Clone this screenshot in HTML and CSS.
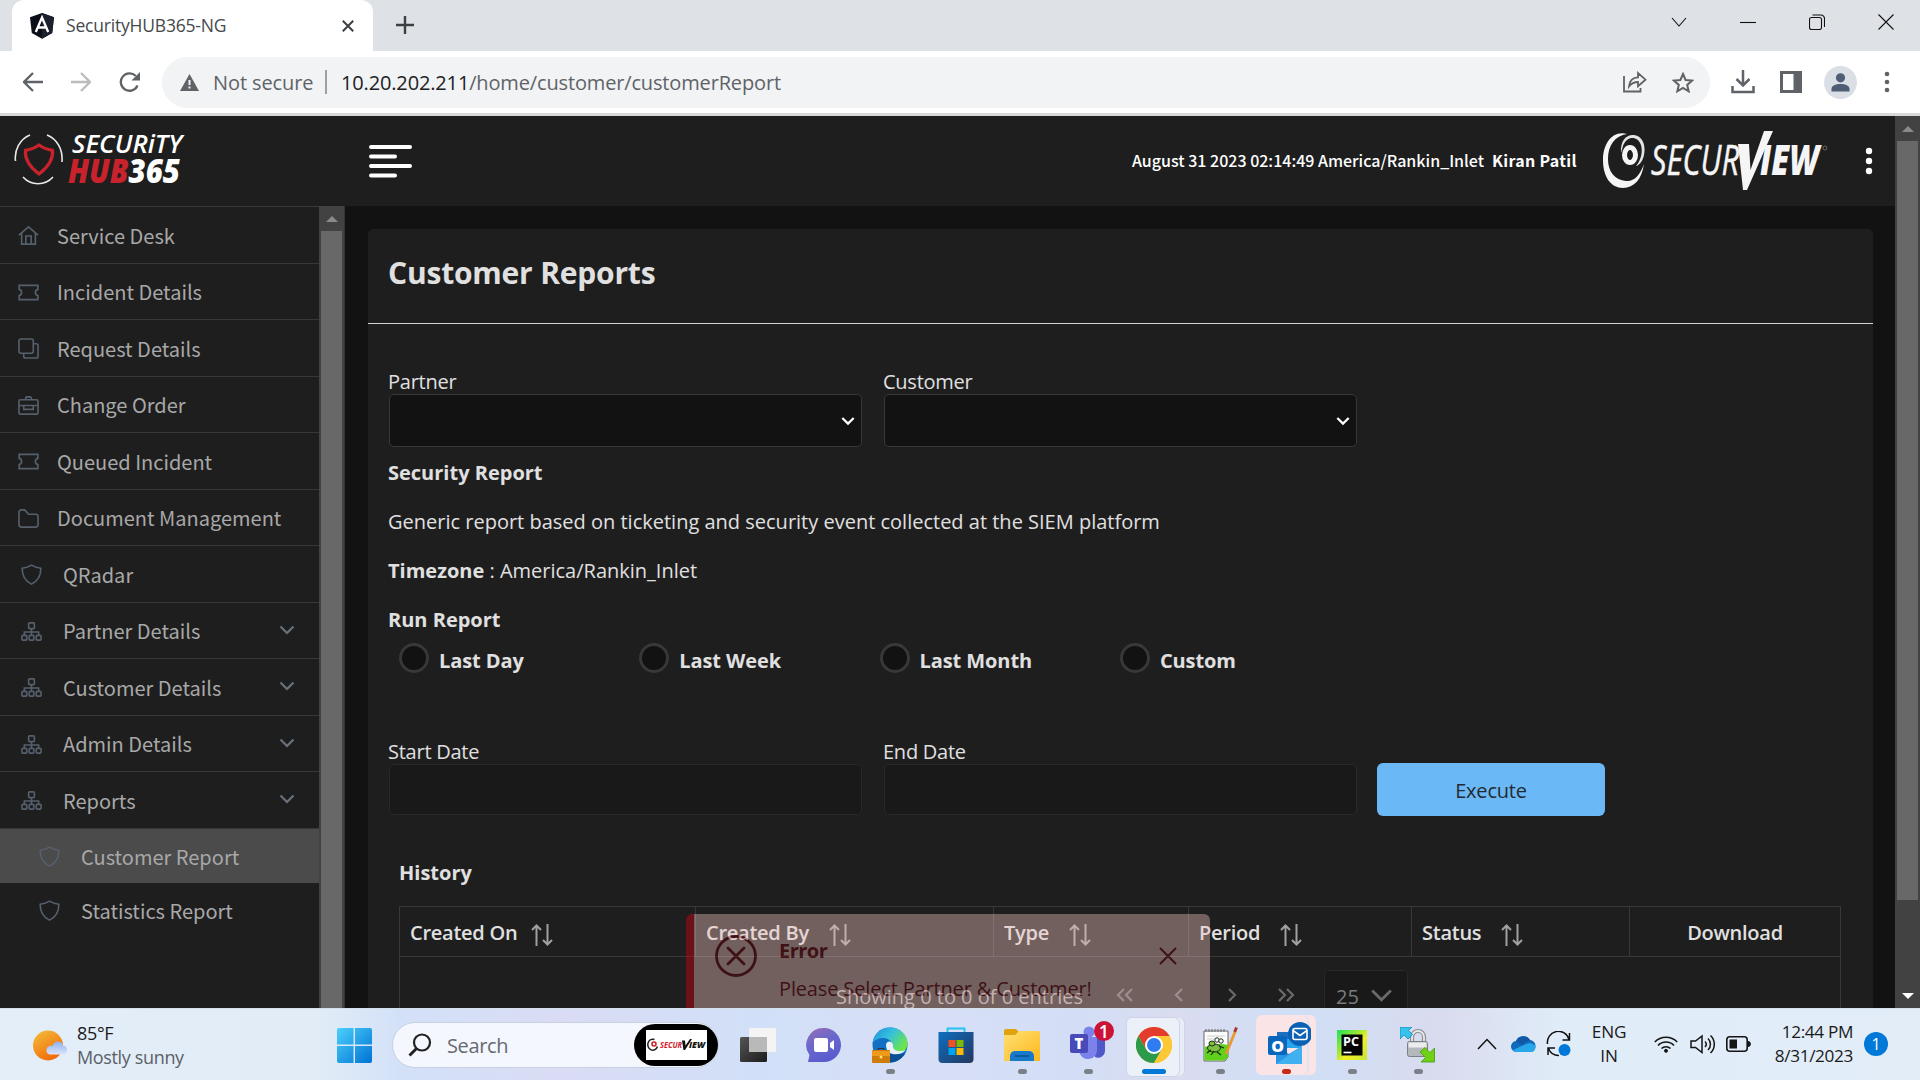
FILE: index.html
```html
<!DOCTYPE html>
<html lang="en">
<head>
<meta charset="utf-8">
<title>SecurityHUB365-NG</title>
<link rel="stylesheet" href="styles.css">
</head>
<body>
<svg width="0" height="0" class="defs">
  <defs>
    <symbol id="i-home" viewBox="0 0 22 22"><path d="M1 10.500 11 2l10 8.500M3.800 9v11h14.400V9M8.200 20v-8.500h5.600V20"/></symbol>
    <symbol id="i-ticket" viewBox="0 0 22 22"><path d="M1.200 3.500h19.600v4.200a3.400 3.400 0 0 0 0 6.600v4.200H1.200v-4.200a3.400 3.400 0 0 0 0-6.600z"/></symbol>
    <symbol id="i-clone" viewBox="0 0 22 22"><rect x="1" y="1" width="15" height="15" rx="2"/><path d="M16 6h3a2 2 0 0 1 2 2v11a2 2 0 0 1-2 2H8a2 2 0 0 1-2-2v-3"/></symbol>
    <symbol id="i-case" viewBox="0 0 22 22"><rect x="1" y="5" width="20" height="15" rx="1.500"/><path d="M8 5V3.500A1.500 1.500 0 0 1 9.500 2h3A1.500 1.500 0 0 1 14 3.500V5M1 11h20M6 11v4h10v-4"/></symbol>
    <symbol id="i-folder" viewBox="0 0 22 22"><path d="M1 4.500A2.500 2.500 0 0 1 3.500 2H7l4 4.500h7.500A2.500 2.500 0 0 1 21 9v8.500a2.500 2.500 0 0 1-2.500 2.500h-15A2.500 2.500 0 0 1 1 17.500z"/></symbol>
    <symbol id="i-shield" viewBox="0 0 22 22"><path d="M11 1.200C8 3 5 4 1.300 4.400c-.3 7 2 12.600 9.700 16.700 7.700-4.100 10-9.700 9.700-16.700C17 4 14 3 11 1.200z"/></symbol>
    <symbol id="i-tree" viewBox="0 0 22 22"><rect x="8" y="2" width="6" height="6" rx="1"/><rect x="1" y="15" width="5" height="5" rx="1"/><rect x="8.500" y="15" width="5" height="5" rx="1"/><rect x="16" y="15" width="5" height="5" rx="1"/><path d="M11 8v7M3.500 15v-3.500h15V15"/></symbol>
    <symbol id="i-down" viewBox="0 0 16 16"><path d="m1.500 4.500 6.500 6.500 6.500-6.500"/></symbol>
    <symbol id="i-sort" viewBox="0 0 22 22"><path d="M5.500 22V1.500M1 6l4.500-4.500L10 6M16.500 0v20.500M12 16l4.500 4.500L21 16"/></symbol>
    <symbol id="i-left" viewBox="0 0 16 16"><path d="m11 2-6 6 6 6"/></symbol>
    <symbol id="i-right" viewBox="0 0 16 16"><path d="m5 2 6 6-6 6"/></symbol>
    <symbol id="i-lefts" viewBox="0 0 18 16"><path d="m8 2-6 6 6 6M16 2l-6 6 6 6"/></symbol>
    <symbol id="i-rights" viewBox="0 0 18 16"><path d="m2 2 6 6-6 6M10 2l6 6-6 6"/></symbol>
  </defs>
</svg>

<div class="tabstrip">
  <div class="tab">
    <svg class="favicon" width="26" height="26" viewBox="0 0 26 26"><path d="M13 0 25 4.300 23.200 20 13 25.700 2.800 20 1 4.300z" fill="#0b0e18"/><path d="M13 0v25.700L23.200 20 25 4.300z" fill="#1b202e"/><path d="M6.800 19 13 4.500 19.200 19M9.300 14.500h7.400" fill="none" stroke="#fff" stroke-width="2.300"/></svg>
    <span class="tab-title">SecurityHUB365-NG</span>
    <svg class="tab-close" width="12" height="12" viewBox="0 0 12 12"><path d="m.8.800 10.400 10.400M11.200.800.800 11.200" stroke="#3c4043" stroke-width="2"/></svg>
  </div>
  <svg class="new-tab" width="18" height="18" viewBox="0 0 18 18"><path d="M9 0v18M0 9h18" stroke="#3c4043" stroke-width="2.400"/></svg>
  <div class="win-controls">
    <svg width="16" height="16" viewBox="0 0 16 16"><path d="m1 4 7 8 7-8" /></svg>
    <svg width="16" height="16" viewBox="0 0 16 16"><path d="M0 8.500h16"/></svg>
    <svg width="16" height="16" viewBox="0 0 16 16"><rect x=".5" y="3.500" width="12" height="12" rx="2"/><path d="M3.500 1h8.500a3.500 3.500 0 0 1 3.500 3.500V13"/></svg>
    <svg width="16" height="16" viewBox="0 0 16 16"><path d="m.5.500 15 15M15.500.500l-15 15"/></svg>
  </div>
</div>

<div class="toolbar">
  <div class="nav">
    <svg width="20" height="20" viewBox="0 0 20 20" stroke="#5f6368"><path d="M20 10H1.500M10 1 1 10l9 9"/></svg>
    <svg width="20" height="20" viewBox="0 0 20 20" stroke="#babcbe"><path d="M0 10h18.500M10 1l9 9-9 9"/></svg>
    <svg width="22" height="20" viewBox="0 0 22 20" stroke="#5f6368"><path d="M18.500 13.500A8.700 8.700 0 1 1 16.800 4"/><path d="M21 0v8.500h-8.500z" fill="#5f6368" stroke="none"/></svg>
  </div>
  <div class="omnibox">
    <svg width="19" height="17" viewBox="0 0 19 17"><path d="M9.500 0 19 17H0z" fill="#5f6368"/><path d="M9.500 6v5M9.500 12.500v2" stroke="#f1f3f4" stroke-width="2"/></svg>
    <span class="not-secure">Not secure</span>
    <i class="omni-sep"></i>
    <span class="url"><b>10.20.202.211</b><span>/home/customer/customerReport</span></span>
    <svg class="share" width="24" height="22" viewBox="0 0 24 22"><path d="M1 5v15.500h16.500V17M6 15.500c.5-6 3.500-9 9-9.200V2l7.500 6.700L15 15.300V11c-4 0-6.500 1.200-9 4.500z"/></svg>
    <svg class="star" width="22" height="21" viewBox="0 0 22 21"><path d="m11 2 2.600 6 6.500.600-4.900 4.300 1.500 6.400L11 15.900l-5.700 3.400 1.500-6.400L1.900 8.600l6.500-.600z"/></svg>
  </div>
  <div class="actions">
    <svg width="24" height="24" viewBox="0 0 24 24"><path d="M12 0v15M5.500 9l6.500 6.500L18.500 9M1.500 16v6h21v-6" fill="none" stroke="#5f6368" stroke-width="2.500"/></svg>
    <svg width="22" height="22" viewBox="0 0 22 22"><path d="M0 0h22v22H0zM3 3v16h10.500V3z" fill="#5f6368" fill-rule="evenodd"/></svg>
    <svg width="33" height="33" viewBox="0 0 33 33"><circle cx="16.500" cy="16.500" r="16.500" fill="#dadfe5"/><circle cx="16.500" cy="11.800" r="4.600" fill="#4f5d75"/><path d="M7.500 25.500v-2.500c0-3.500 4-5 9-5s9 1.500 9 5v2.500z" fill="#4f5d75"/></svg>
    <svg width="6" height="22" viewBox="0 0 6 22"><g fill="#5f6368"><circle cx="3" cy="3" r="2.300"/><circle cx="3" cy="11" r="2.300"/><circle cx="3" cy="19" r="2.300"/></g></svg>
  </div>
</div>

<div class="page">
  <div class="app">
    <header class="header">
      <svg class="hub-logo" width="176" height="54" viewBox="0 0 176 54" fill="none">
        <path d="M1.500 28C0 17 6 6 16 2M33 2c10 4 16 14 15 27M9 44c8 9 22 9 30 0" stroke="#e8e8e8" stroke-width="1.600"/>
        <path d="M25 12c-4 3-8 4.500-13.500 5.300C10.500 27 16 34 25 41c9-7 14.500-14 13.500-23.700C33 16.500 29 15 25 12z" stroke="#c8232c" stroke-width="3.200"/>
        <text x="58" y="20" font-size="26" font-weight="600" font-style="italic" fill="#fff" textLength="110" lengthAdjust="spacingAndGlyphs">SECURiTY</text>
        <text x="54" y="50" font-size="33" font-weight="800" font-style="italic" textLength="112" lengthAdjust="spacingAndGlyphs"><tspan fill="#c8232c">HUB</tspan><tspan fill="#fff">365</tspan></text>
      </svg>
      <svg class="burger" width="43" height="34" viewBox="0 0 43 34"><path d="M2 2h39M2 11.500h24M2 21h39M2 30.500h24" stroke="#fff" stroke-width="4" stroke-linecap="round"/></svg>
      <span class="clock">August 31 2023 02:14:49 America/Rankin_Inlet</span>
      <b class="user">Kiran Patil</b>
      <svg class="sv-logo" width="226" height="62" viewBox="0 0 226 62">
        <path d="M24 3C10-1 0 12 0 29c0 17 8 28 20 28 11 0 19-9 21-24-4 11-10 18-18 17C12 49 5 41 5 28 5 14 12 5 24 3z" fill="#f5f5f5"/>
        <path d="M18 22C17 9 24 3 31 4c9 1 12 11 10 20-1 5-4 10-8 11 5-6 7-14 5-21C35 5 24 4 20 15z" fill="#e4e4e4"/>
        <ellipse cx="27" cy="24" rx="5.500" ry="7.500" fill="none" stroke="#f5f5f5" stroke-width="5"/>
        <text x="48" y="44" font-size="42" font-style="italic" font-weight="400" stroke="#f5f5f5" stroke-width=".5" fill="#f5f5f5" textLength="88" lengthAdjust="spacingAndGlyphs">SECUR</text>
        <text x="157" y="44" font-size="42" font-style="italic" font-weight="800" fill="#f5f5f5" textLength="59" lengthAdjust="spacingAndGlyphs">IEW</text>
        <path d="M135 13h11l1.500 26L161 0h9L144 59h-4z" fill="#f5f5f5"/>
        <circle cx="222" cy="17" r="2" fill="none" stroke="#777" stroke-width=".8"/>
      </svg>
      <svg class="kebab" width="8" height="28" viewBox="0 0 8 28"><g fill="#fff"><circle cx="4" cy="4" r="3.200"/><circle cx="4" cy="14" r="3.200"/><circle cx="4" cy="24" r="3.200"/></g></svg>
    </header>
    <div class="body">
      <nav class="sidebar">
        <a class="item"><svg class="ic"><use href="#i-home"/></svg><span>Service Desk</span></a>
        <a class="item"><svg class="ic"><use href="#i-ticket"/></svg><span>Incident Details</span></a>
        <a class="item"><svg class="ic"><use href="#i-clone"/></svg><span>Request Details</span></a>
        <a class="item"><svg class="ic"><use href="#i-case"/></svg><span>Change Order</span></a>
        <a class="item"><svg class="ic"><use href="#i-ticket"/></svg><span>Queued Incident</span></a>
        <a class="item"><svg class="ic"><use href="#i-folder"/></svg><span>Document Management</span></a>
        <a class="item wide"><svg class="ic"><use href="#i-shield"/></svg><span>QRadar</span></a>
        <a class="item wide"><svg class="ic"><use href="#i-tree"/></svg><span>Partner Details</span><svg class="chev"><use href="#i-down"/></svg></a>
        <a class="item wide"><svg class="ic"><use href="#i-tree"/></svg><span>Customer Details</span><svg class="chev"><use href="#i-down"/></svg></a>
        <a class="item wide"><svg class="ic"><use href="#i-tree"/></svg><span>Admin Details</span><svg class="chev"><use href="#i-down"/></svg></a>
        <a class="item wide"><svg class="ic"><use href="#i-tree"/></svg><span>Reports</span><svg class="chev"><use href="#i-down"/></svg></a>
        <a class="item sub active"><svg class="ic"><use href="#i-shield"/></svg><span>Customer Report</span></a>
        <a class="item sub"><svg class="ic"><use href="#i-shield"/></svg><span>Statistics Report</span></a>
      </nav>
      <div class="side-scroll"><i class="arrow-up"></i><i class="thumb"></i></div>
      <main class="main">
        <section class="card">
          <h1 class="card-title">Customer Reports</h1>
          <div class="card-body">
            <div class="row">
              <div class="field"><label>Partner</label><div class="select"><svg><use href="#i-down"/></svg></div></div>
              <div class="field"><label>Customer</label><div class="select"><svg><use href="#i-down"/></svg></div></div>
            </div>
            <p class="line"><b>Security Report</b></p>
            <p class="line desc">Generic report based on ticketing and security event collected at the SIEM platform</p>
            <p class="line"><b>Timezone</b><span class="tz"> : America/Rankin_Inlet</span></p>
            <p class="line"><b>Run Report</b></p>
            <div class="radios">
              <div class="radio"><i></i><b>Last Day</b></div>
              <div class="radio"><i></i><b>Last Week</b></div>
              <div class="radio"><i></i><b>Last Month</b></div>
              <div class="radio"><i></i><b>Custom</b></div>
            </div>
            <div class="row dates">
              <div class="field"><label>Start Date</label><div class="input"></div></div>
              <div class="field"><label>End Date</label><div class="input"></div></div>
              <div class="execute">Execute</div>
            </div>
            <h2 class="history">History</h2>
            <div class="table">
              <div class="thead">
                <div class="th first"><span>Created On</span><svg><use href="#i-sort"/></svg></div>
                <div class="th"><span>Created By</span><svg><use href="#i-sort"/></svg></div>
                <div class="th"><span>Type</span><svg><use href="#i-sort"/></svg></div>
                <div class="th"><span>Period</span><svg><use href="#i-sort"/></svg></div>
                <div class="th"><span>Status</span><svg><use href="#i-sort"/></svg></div>
                <div class="th dl"><span>Download</span></div>
              </div>
              <div class="pager">
                <span class="showing">Showing 0 to 0 of 0 entries</span>
                <svg width="18" height="16"><use href="#i-lefts"/></svg>
                <svg width="16" height="16"><use href="#i-left"/></svg>
                <svg width="16" height="16"><use href="#i-right"/></svg>
                <svg width="18" height="16"><use href="#i-rights"/></svg>
                <div class="size"><span>25</span><svg width="23" height="23"><use href="#i-down"/></svg></div>
              </div>
            </div>
          </div>
        </section>
      </main>
    </div>
  </div>
  <div class="page-scroll"><i class="arrow-up"></i><i class="thumb"></i><i class="arrow-down"></i></div>
  <div class="toast">
    <svg width="42" height="42" viewBox="0 0 42 42"><circle cx="21" cy="21" r="19.500"/><path d="m13 13 16 16M29 13 13 29" stroke-linecap="round"/></svg>
    <div class="toast-text"><b>Error</b><span>Please Select Partner &amp; Customer!</span></div>
    <svg class="toast-x" width="18" height="18" viewBox="0 0 18 18"><path d="m1 1 16 16M17 1 1 17"/></svg>
  </div>
</div>

<div class="taskbar">
  <svg class="weather" width="35" height="32" viewBox="0 0 35 32"><defs><linearGradient id="sun" x1="0" y1="0" x2=".6" y2="1"><stop offset="0" stop-color="#f3c13a"/><stop offset="1" stop-color="#f26a0c"/></linearGradient><linearGradient id="cl" x1="0" y1="0" x2="0" y2="1"><stop offset="0" stop-color="#8fb1ee"/><stop offset="1" stop-color="#dbe4fb"/></linearGradient></defs><circle cx="15" cy="15.500" r="15" fill="url(#sun)"/><path d="M16.500 24.500a4.500 4.500 0 0 1 0-8.500c1-.5 2-.5 3 0 1-3 3-4.500 5.500-4.500s4.500 1.500 5 4c5.500.500 5.500 9 0 9z" fill="url(#cl)"/></svg>
  <div class="forecast"><span>85°F</span><span class="dim">Mostly sunny</span></div>
  <svg class="start" width="35" height="35" viewBox="0 0 36 36"><defs><linearGradient id="win" x1="0" y1="0" x2="1" y2="1"><stop offset="0" stop-color="#4cd0fb"/><stop offset="1" stop-color="#0072d4"/></linearGradient></defs><path d="M2 0h15v17H0V2a2 2 0 0 1 2-2zM18.500 0H34a2 2 0 0 1 2 2v15H18.500zM0 18.500h17V36H2a2 2 0 0 1-2-2zM18.500 18.500H36V34a2 2 0 0 1-2 2H18.500z" fill="url(#win)"/></svg>
  <div class="search">
    <svg width="24" height="24" viewBox="0 0 24 24" fill="none" stroke="#222"><circle cx="14" cy="9.500" r="8" stroke-width="2.200"/><path d="m8.500 15.500-7 7" stroke-width="3"/></svg>
    <span class="search-text">Search</span>
    <div class="pill"><svg width="61" height="30" viewBox="0 0 61 30"><rect width="61" height="30" fill="#fff"/><path d="M8.500 9.500a5 5.500 0 1 0 3 7" fill="none" stroke="#222" stroke-width="1.500"/><circle cx="8" cy="14" r="2" fill="none" stroke="#d0202a" stroke-width="1.600"/><text x="14" y="17.500" font-size="9.500" font-style="italic" font-weight="700" fill="#d0202a" textLength="22" lengthAdjust="spacingAndGlyphs">SECUR</text><path d="M36 10.500h3l.5 5 4.500-6.500h2l-7 11h-1.500z" fill="#111"/><text x="43" y="17.500" font-size="9.500" font-style="italic" font-weight="800" fill="#111" textLength="16" lengthAdjust="spacingAndGlyphs">IEW</text></svg></div>
  </div>
  <div class="apps">
    <div class="appi"><svg width="36" height="36" viewBox="0 0 36 36"><defs><linearGradient id="tv" x1="0" y1="0" x2="1" y2="1"><stop offset="0" stop-color="#555"/><stop offset="1" stop-color="#1c1c1c"/></linearGradient></defs><rect x="0" y="10" width="27" height="25" rx="1.500" fill="url(#tv)"/><rect x="9" y="1" width="27" height="24" rx="1.500" fill="#f4f4f4"/><path d="M9 10h18v15H10.500A1.500 1.500 0 0 1 9 23.500z" fill="#b9b9b9"/></svg></div>
    <div class="appi"><svg width="36" height="36" viewBox="0 0 36 36"><defs><linearGradient id="ch" x1="0" y1="0" x2=".5" y2="1"><stop offset="0" stop-color="#9a6cb4"/><stop offset=".5" stop-color="#6a68cc"/><stop offset="1" stop-color="#5b5bd0"/></linearGradient></defs><path d="M18 1a17 17 0 1 1 0 34H2l1.500-7A17 17 0 0 1 18 1z" fill="url(#ch)"/><rect x="8" y="11" width="14" height="14" rx="2" fill="#fff"/><path d="M24 16l4-3v10l-4-3z" fill="#fff"/></svg></div>
    <div class="appi run"><svg width="36" height="36" viewBox="0 0 36 36"><defs><linearGradient id="ed" x1="0" y1="0" x2="1" y2=".6"><stop offset="0" stop-color="#1d8fdc"/><stop offset=".5" stop-color="#35c1dc"/><stop offset="1" stop-color="#6ee646"/></linearGradient></defs><circle cx="18" cy="18" r="17.500" fill="#1170c4"/><path d="M.5 16C2 6 9 .500 18 .500 28 .500 36 8 35.500 17c-.5 6-5 9-10 9-4 0-6-2-5-4 2-6-3-11-9-11-5 0-9 2-11 5z" fill="url(#ed)"/><path d="M20 22c-1 4 4 7 13 4-3 6-9 9.500-15 9.500-4-5-4-11 2-13.500z" fill="#0c4f93"/><path d="M14 18c0-4 6-5 7 0-1 5 5 8 13 5-5 6-20 7-20-5z" fill="#e8f1fa"/><rect x="0" y="23" width="18" height="13" rx="1" fill="#d07c0a"/><path d="M0 24h18v5H0z" fill="#ee9a1c"/><circle cx="9" cy="30" r="1.500" fill="#ffe36b"/><path d="M6 23v-1.500h6V23" fill="none" stroke="#333"/></svg></div>
    <div class="appi"><svg width="36" height="36" viewBox="0 0 36 36"><defs><linearGradient id="st" x1="0" y1="0" x2="1" y2="1"><stop offset="0" stop-color="#0e6fc0"/><stop offset="1" stop-color="#24375f"/></linearGradient></defs><path d="M9.500 7V1.500h17V7" fill="none" stroke="#25c0f2" stroke-width="1.800"/><path d="M.5 5h35v27a4 4 0 0 1-4 4h-27a4 4 0 0 1-4-4z" fill="url(#st)"/><path d="M10.500 13h7v7h-7z" fill="#f25022"/><path d="M18.500 13h7v7h-7z" fill="#7fba00"/><path d="M10.500 21h7v7h-7z" fill="#00a4ef"/><path d="M18.500 21h7v7h-7z" fill="#ffb900"/></svg></div>
    <div class="appi run"><svg width="36" height="36" viewBox="0 0 36 36"><defs><linearGradient id="fo" x1="0" y1="0" x2="1" y2="1"><stop offset="0" stop-color="#ffdf72"/><stop offset="1" stop-color="#fcb91e"/></linearGradient></defs><path d="M0 4a2 2 0 0 1 2-2h10l3 3v4H0z" fill="#e0a30e"/><path d="M0 8h11l4-4h19a2 2 0 0 1 2 2v28H0z" fill="url(#fo)"/><path d="M6 34v-5a5 5 0 0 1 5-5h14a5 5 0 0 1 5 5v5z" fill="#1679ca"/><path d="M11 29h14" stroke="#0a4f90" stroke-width="1.500"/></svg></div>
    <div class="appi run teams"><svg width="46" height="42" viewBox="0 0 46 42"><circle cx="20" cy="11" r="5.500" fill="#7b83eb"/><path d="M24 16h12v14a7 7 0 0 1-10 6z" fill="#5059c9"/><path d="M11 16h17v14a9 9 0 0 1-17 3z" fill="#7b83eb"/><rect x="1" y="13" width="18" height="19" rx="2" fill="#474ab8"/><text x="10" y="28" font-size="15" font-weight="800" fill="#fff" text-anchor="middle">T</text><circle cx="35" cy="10" r="10" fill="#cc1236"/><text x="35" y="16.500" font-size="18" font-weight="600" fill="#fff" text-anchor="middle">1</text></svg></div>
    <div class="appi run chrome"><svg width="36" height="36" viewBox="0 0 36 36"><circle cx="18" cy="18" r="18" fill="#fcc934"/><path d="M18 9h15.600a18 18 0 0 0-31.200 0L10 22z" fill="#e33b2e"/><path d="M2.400 9a18 18 0 0 0 15.600 27l8-13.500-15.800 0z" fill="#2b9a4b"/><path d="M18 36 25.800 22.500 26 9h7.600A18 18 0 0 1 18 36z" fill="#fcc934"/><circle cx="18" cy="18" r="9" fill="#fff"/><circle cx="18" cy="18" r="7" fill="#2f7cf0"/></svg></div>
    <div class="appi run"><svg width="36" height="36" viewBox="0 0 36 36"><path d="M2 4h24v26l-3 4H2z" fill="#fdfdfd" stroke="#666"/><path d="M2.500 20q12-5 23.500-2v12l-3 3.500H2.500z" fill="#5fd01c"/><path d="M4 5v-3M7 5v-3M10 5v-3M13 5v-3M16 5v-3M19 5v-3M22 5v-3" stroke="#777" stroke-width="1.200"/><path d="M5 9h18M5 12h8" stroke="#ccc"/><g fill="#7bc043" stroke="#1d2a12" stroke-width="1"><ellipse cx="12" cy="21" rx="6.500" ry="4"/><ellipse cx="10" cy="16.500" rx="3" ry="2.500"/><circle cx="15" cy="13" r="2.200" fill="#fff"/><circle cx="19" cy="14" r="2.200" fill="#fff"/></g><path d="M5 26l4-3M9 28l3-4M15 25l4 3M17 19l5 2" stroke="#1d2a12" stroke-width="1.200"/><path d="m24 27 9-22" stroke="#e8992b" stroke-width="2.800"/><path d="m32.700 5 1.800-4.500" stroke="#b0382b" stroke-width="3"/></svg></div>
    <div class="appi run red outlook"><svg width="44" height="44" viewBox="0 0 44 44"><path d="M10 10h24v14H10z" fill="#1a6fc0"/><path d="M17 17h17v9H17z" fill="#29a5ee"/><path d="M9 24l13 8 13-8v18H9z" fill="#2a95e6"/><path d="M9 42l26-18v18z" fill="#41b0f0"/><rect x="1" y="14" width="19" height="19" rx="2" fill="#0a66bd"/><text x="10.500" y="29.500" font-size="16" font-weight="800" fill="#fff" text-anchor="middle">O</text><circle cx="33" cy="12" r="12" fill="#0b62b4"/><rect x="26" y="6.500" width="14" height="11" rx="2" fill="none" stroke="#fff" stroke-width="1.600"/><path d="m26 8.500 7 5 7-5" fill="none" stroke="#fff" stroke-width="1.600"/></svg></div>
    <div class="appi run"><svg width="32" height="32" viewBox="0 0 32 32"><defs><linearGradient id="pc" x1="0" y1="0" x2="1" y2="1"><stop offset="0" stop-color="#1fe05a"/><stop offset=".35" stop-color="#8ee83a"/><stop offset=".6" stop-color="#f3ee25"/><stop offset="1" stop-color="#c5e637"/></linearGradient></defs><rect x="1" y="1" width="30" height="30" fill="url(#pc)"/><rect x="5.500" y="5.500" width="21" height="21" fill="#050505"/><text x="7" y="16.500" font-size="11.500" font-weight="700" fill="#fff" textLength="16" lengthAdjust="spacingAndGlyphs">PC</text><path d="M7.500 23.500h8" stroke="#fff" stroke-width="1.600"/></svg></div>
    <div class="appi run"><svg width="36" height="36" viewBox="0 0 36 36"><path d="M12 17V10a6 6 0 0 1 12 0v7" fill="none" stroke="#8b8e92" stroke-width="4.200"/><path d="M12 17V10a6 6 0 0 1 12 0v7" fill="none" stroke="#e6e8ea" stroke-width="1.800"/><path d="M0 0h12l-3.500 3.500 4 4-4.500 4.500-4-4L0 12z" fill="#35c4ee" stroke="#1884b8" stroke-width=".8"/><rect x="7.500" y="14.500" width="20" height="15" rx="2" fill="#b4b7bc" stroke="#7c7f84"/><path d="M8.500 15.500h18v5h-18z" fill="#ececee"/><path d="m20 25 5-4.500 5 5L34.500 21V35H21l4.500-4.500z" fill="#6fd015" stroke="#3f9a10" stroke-width=".8"/></svg></div>
  </div>
  <div class="tray">
    <svg width="20" height="12" viewBox="0 0 20 12"><path d="m1 11 9-9.500L19 11" fill="none" stroke="#111" stroke-width="1.500"/></svg>
    <svg width="25" height="18" viewBox="0 0 25 18"><path d="M6 17a5.500 5.500 0 0 1-1-11A8 8 0 0 1 19 5c4 .500 6 4 5.500 7s-2.500 5-5 5z" fill="#0f6cbd"/><path d="M5 6a8 8 0 0 1 14-1l-8 5z" fill="#1159a6"/><path d="M7 17c-2 0-4-.500-5-2l13-6c4-2 9 0 9.500 3 0 3-2 5-5 5z" fill="#28a8ea"/></svg>
    <svg width="26" height="26" viewBox="0 0 26 26"><path d="M1.500 13A11 11 0 0 1 23 8.500M23.500 2v7h-7M2 24v-7h7M2.500 17.500A11 11 0 0 0 13 24.500" fill="none" stroke="#111" stroke-width="1.500"/><circle cx="18.500" cy="19" r="6" fill="#0078d7"/></svg>
    <div class="lang"><span>ENG</span><span>IN</span></div>
    <svg width="24" height="18" viewBox="0 0 24 18" fill="none" stroke="#151515" stroke-width="1.600"><path d="M.8 7a15.500 15.500 0 0 1 22.400 0M4 10.500a11 11 0 0 1 16 0M7.500 13.500a6.500 6.500 0 0 1 9 0"/><circle cx="12" cy="15.800" r="1.500" fill="#151515" stroke-width="1"/></svg>
    <svg width="25" height="20" viewBox="0 0 25 20" fill="none" stroke="#151515" stroke-width="1.500"><path d="M1 7v6.500h4.500L12 18.500V2L5.500 7zM15 7.500a4 4 0 0 1 0 5.500M18 4.500a8 8 0 0 1 0 11.500M20.500 1.500a12 12 0 0 1 0 17.500"/></svg>
    <svg width="25" height="16" viewBox="0 0 25 16"><rect x=".8" y=".8" width="20.400" height="14.400" rx="3" fill="none" stroke="#151515" stroke-width="1.600"/><rect x="3.500" y="3.500" width="7.500" height="9" fill="#151515"/><path d="M21.500 5c4.500-.500 4.500 6.500 0 6z" fill="#151515"/></svg>
    <div class="time"><span>12:44 PM</span><span>8/31/2023</span></div>
    <div class="badge">1</div>
  </div>
</div>
</body>
</html>
```
FILE: styles.css
```css
* { box-sizing: border-box; }
body {
  margin: 0; width: 1920px; height: 1080px; overflow: hidden;
  display: flex; flex-direction: column;
  font-family: "Open Sans", "Noto Sans", sans-serif; font-size: 20px;
  background: #121212;
}
svg { flex: none; display: block; }
.defs { position: absolute; }

/* browser chrome */
.tabstrip { height: 51px; flex: none; background: #dee1e6; display: flex; align-items: flex-end; padding-left: 12px; }
.tab { width: 361px; height: 51px; background: #fff; border-radius: 12px 12px 0 0; display: flex; align-items: center; padding: 0 19px 0 17px; }
.tab-title { margin: -1px 0 0 11px; font-size: 17.500px; color: #45494d; letter-spacing: -.2px; flex: 1; }
.new-tab { margin: 0 0 17px 23px; }
.win-controls { margin: 0 26px 21px auto; display: flex; gap: 53px; }
.win-controls svg { fill: none; stroke: #111; stroke-width: 1.100; }
.toolbar { height: 65px; flex: none; background: #fff; border-bottom: 3px solid #d8d8d8; display: flex; align-items: center; padding: 0 30px 0 23px; }
.nav { display: flex; gap: 28px; width: 139px; flex: none; align-items: center; }
.nav svg { fill: none; stroke-width: 2.300; }
.omnibox { width: 1548px; flex: none; height: 51px; border-radius: 26px; background: #f1f3f4; display: flex; align-items: center; padding: 0 16px 0 18px; }
.not-secure { margin-left: 14px; color: #5f6368; width: 112px; white-space: nowrap; letter-spacing: -.1px; }
.omni-sep { width: 2px; height: 24px; background: #9aa0a6; }
.url { margin-left: 14px; color: #5f6368; flex: 1; letter-spacing: -.15px; }
.url b { font-weight: 400; color: #202124; }
.share, .star { fill: none; stroke: #5f6368; stroke-width: 1.800; }
.star { margin-left: 25px; stroke-width: 2; }
.actions { display: flex; align-items: center; margin-left: 21px; gap: 25px; }
.actions svg:nth-child(3) { margin-left: -3px; }
.actions svg:nth-child(4) { margin-left: 2px; }

/* application */
.page { height: 892px; flex: none; display: flex; position: relative; overflow: hidden; }
.app { width: 1895px; display: flex; flex-direction: column; }
.header { height: 90px; flex: none; background: #1e1e1e; display: flex; color: #fff; font-family: "Noto Sans CJK SC", sans-serif; font-size: 16px; padding-left: 14px; }
.hub-logo, .sv-logo { font-family: "Open Sans", sans-serif; }
.hub-logo { margin-top: 17px; }
.burger { margin: 29px 0 0 179px; }
.clock { margin: 32px 0 0 720px; line-height: 24px; white-space: nowrap; width: 360px; font-weight: 500; }
.user { margin-top: 32px; line-height: 24px; width: 111px; white-space: nowrap; letter-spacing: .3px; }
.sv-logo { margin-top: 15px; }
.kebab { margin: 31px 0 0 36px; }
.body { flex: 1; display: flex; min-height: 0; }
.sidebar { width: 319px; background: #1e1e1e; border-top: 1px solid #3a3a3a; font-family: "Noto Sans CJK SC", sans-serif; font-size: 20px; color: #a8a8a8; }
.item { height: 56.500px; border-bottom: 1.500px solid #383838; display: flex; align-items: center; padding: 2px 24px 0 18px; white-space: nowrap; }
.item .ic { width: 21px; height: 21px; fill: none; stroke: #56606c; stroke-width: 1.700; margin-right: 18px; }
.item.wide { padding-left: 21px; }
.item.wide .ic { margin-right: 21px; }
.item.sub { padding-left: 39px; height: 54px; border: 0; }
.item.sub .ic { margin-right: 21px; }
.item.active { background: #4b4b4b; }
.item span { flex: 1; margin-top: -1px; }
.chev { width: 16px; height: 16px; fill: none; stroke: #68717c; stroke-width: 2.200; margin-top: -3px; }
.side-scroll { width: 26px; background: #424242; border-right: 1px solid #333; }
.page-scroll { width: 25px; background: #424242; display: flex; flex-direction: column; }
.arrow-up { display: block; width: 0; height: 0; margin: 10px 0 0 7px; border: 6px solid transparent; border-top: 0; border-bottom-color: #8a8a8a; }
.thumb { display: block; width: 21px; margin: 9px 0 0 2px; background: #686868; height: 800px; }
.page-scroll .thumb { height: 759px; }
.arrow-down { margin: auto 0 9px 7px; width: 0; border: 6px solid transparent; border-bottom: 0; border-top-color: #fff; }

.main { flex: 1; background: #121212; padding: 23px 22px 0 23px; color: #e0e0e0; }
.card { background: #1e1e1e; border-radius: 5px 5px 0 0; height: 780px; }
.card-title { margin: 0; height: 95px; border-bottom: 1px solid #d0d5d3; padding: 24px 0 0 20px; font-size: 30px; line-height: 40px; font-weight: 700; letter-spacing: -.2px; }
.card-body { padding: 45px 0 0 20px; display: flex; flex-direction: column; }
.row { display: flex; gap: 21px; }
.field { width: 474px; }
.field label { display: block; height: 25px; line-height: 26px; letter-spacing: -.25px; }
.select { height: 53px; margin-left: 1px; background: #121212; border: 1px solid #383838; border-radius: 5px; display: flex; align-items: center; justify-content: flex-end; padding-right: 6px; }
.select svg { width: 14px; height: 14px; fill: none; stroke: #fff; stroke-width: 2.600; }
.line { margin: 0; height: 49px; padding-top: 14px; line-height: 24px; white-space: nowrap; }
.radios { display: flex; height: 30px; padding-left: 11px; }
.radio { width: 240.300px; display: flex; letter-spacing: -.1px; }
.radio i { width: 30px; height: 30px; border-radius: 50%; border: 3px solid #383838; background: #121212; margin-right: 10px; }
.radio b { line-height: 36px; }
.dates { margin-top: 66px; align-items: flex-end; }
.input { height: 51px; margin-left: 1px; background: #191919; border: 1px solid #292929; border-radius: 5px; }
.execute { width: 228px; height: 53px; margin: 0 0 -1px -1px; background: #6bb8f7; border-radius: 6px; color: #242a30; text-align: center; line-height: 55px; letter-spacing: -.2px; }
.history { margin: 46px 0 0 11px; font-size: 20px; line-height: 24px; font-weight: 700; }
.table { margin: 21px 0 0 11px; width: 1442px; height: 130px; border: 1px solid #383838; }
.thead { height: 50px; border-bottom: 1px solid #383838; display: grid; grid-template-columns: 296px 298px 195px 223px 218px 1fr; font-weight: 600; letter-spacing: -.25px; }
.th { padding-left: 10px; display: flex; align-items: center; border-right: 1px solid #383838; }
.th svg { width: 22px; height: 22px; fill: none; stroke: #a0a0a0; stroke-width: 2; margin: 6px 0 0 20px; }
.th.first svg { margin-left: 14px; }
.th span { margin-top: 1px; }
.dl { justify-content: center; padding: 0; border: 0; }
.pager { display: flex; align-items: center; padding-left: 436px; height: 76px; }
.pager svg { fill: none; stroke: #6a6a6a; stroke-width: 2.200; }
.showing { width: 280px; color: #a9a9a9; white-space: nowrap; padding-top: 2px; }
.pager > svg { margin-right: 37px; }
.size { width: 84px; height: 52px; margin: 2px 0 0 -8px; background: #191919; border: 1px solid #292929; border-radius: 5px; display: flex; align-items: center; padding-left: 11px; color: #7c7c7c; }
.size svg { margin: -2px 0 0 11px; stroke-width: 1.900; }

.toast { position: absolute; left: 686px; top: 798px; width: 524px; height: 120px; background: #f0c3c1; border-left: 8px solid #de0014; border-radius: 6px; opacity: .4; color: #700008; display: flex; }
.toast > svg { margin: 21px 0 0 21px; fill: none; stroke: #700008; stroke-width: 2.800; }
.toast-text { margin: 25px 0 0 22px; display: flex; flex-direction: column; width: 380px; line-height: 24px; letter-spacing: -.15px; }
.toast-text b { letter-spacing: -.5px; }
.toast-text span { margin-top: 14px; }
.toast .toast-x { margin: 33px 0 0 0; stroke-width: 2; }

/* taskbar */
.taskbar { height: 72px; flex: none; display: flex; border-top: 1px solid #d4e0ec; background: linear-gradient(90deg, #e3eef8 0, #e1ecf7 320px, #d3e1f8 400px, #d9dcf4 560px, #d1e0f8 760px, #d7dff6 900px, #d3def6 1080px, #dadcf0 1180px, #cfdff6 1290px, #d9dbee 1440px, #e0ecf8 1560px, #e2edf8 100%); color: #1a1a1a; font-size: 18px; line-height: 24px; }
.weather { margin: 21px 0 0 33px; }
.forecast { display: flex; flex-direction: column; margin: 12px 0 0 9px; width: 260px; letter-spacing: -.35px; }
.dim { color: #5b6066; }
.start { margin-top: 19px; }
.search { width: 327px; height: 46px; margin: 13px 0 0 20px; background: #f4f7fd; border: 1px solid #c7d0e2; border-radius: 23px; display: flex; align-items: center; padding-left: 15px; }
.search-text { font-size: 20px; color: #666a70; margin: 1px 0 0 15px; flex: 1; letter-spacing: -.35px; }
.pill { width: 84px; height: 42px; border-radius: 21px; background: #000; display: flex; align-items: center; justify-content: center; }
.apps { display: flex; margin-left: 6px; }
.appi { width: 66px; height: 71px; display: flex; flex-direction: column; align-items: center; padding-top: 18px; }
.appi.run::after { content: ""; width: 9px; height: 5px; border-radius: 3px; background: #7b7f88; margin-top: 6px; }
.appi svg[width="32"] { margin: 2px 0; }
.teams { padding-top: 15px; }
.teams svg { margin: -3px 0 0 7px; }
.chrome, .outlook { position: relative; isolation: isolate; }
.chrome::before, .outlook::before { content: ""; position: absolute; z-index: -1; border-radius: 6px; }
.chrome::before { left: 5px; top: 8px; width: 52px; height: 58px; background: #ecf0f9; border: 1px solid #cdd4e6; box-shadow: 5px 0 0 -1px #e8edf8, 6px 0 0 -1px #cdd4e6; }
.chrome.run::after { width: 24px; background: #0078d7; }
.outlook { padding-top: 13px; }
.outlook::before { left: 3px; top: 6px; width: 51px; height: 60px; background: #fbe4e6; box-shadow: 2px 0 0 #dfe3f3, 9px 0 0 #fbe4e6; }
.outlook svg { margin: 0 0 -3px 6px; }
.red.run::after { background: #c42b1c; }
.tray { display: flex; align-items: center; height: 70px; }
.lang, .time { display: flex; flex-direction: column; font-size: 17.200px; letter-spacing: -.2px; }
.lang { align-items: center; }
.time { align-items: flex-end; }
.tray > :nth-child(1) { margin-left: 26px; }
.tray > :nth-child(2) { margin-left: 14px; }
.tray > :nth-child(3) { margin-left: 10px; }
.lang { width: 36px; margin-left: 19px; }
.tray > :nth-child(5) { margin-left: 27px; }
.tray > :nth-child(6) { margin-left: 12px; }
.tray > :nth-child(7) { margin-left: 11px; }
.time { width: 90px; margin-left: 12px; letter-spacing: -.35px; }
.badge { width: 24px; height: 24px; border-radius: 50%; background: #0078d7; color: #fff; text-align: center; margin-left: 11px; font-size: 16px; }
```
